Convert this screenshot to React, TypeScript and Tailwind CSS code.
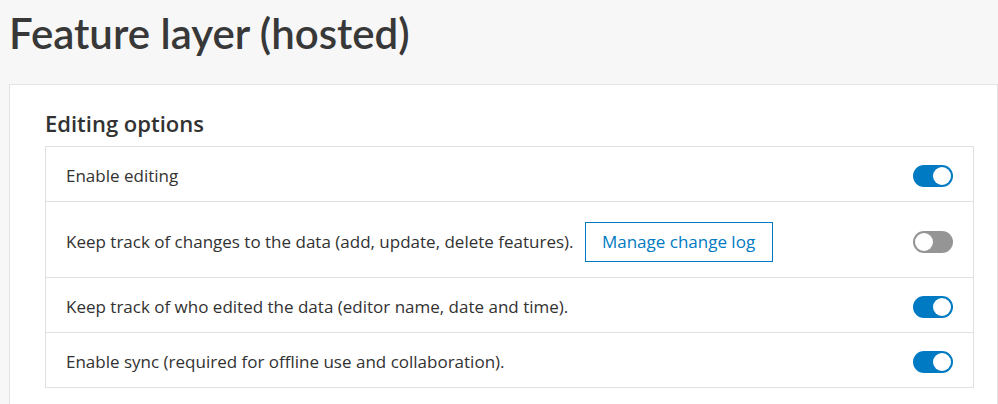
import React from "react";

function Toggle({ on }: { on: boolean }) {
  return (
    <div
      className={`relative h-[22px] w-[40px] rounded-full ${on ? "bg-[#007ac2]" : "bg-[#959595]"}`}
    >
      <div
        className={`absolute top-[2px] h-[18px] w-[18px] rounded-full bg-white ${on ? "right-[2px]" : "left-[2px]"}`}
      />
    </div>
  );
}

function Row({ label, on, button, h }: { label: string; on: boolean; button?: boolean; h: string }) {
  return (
    <div className={`flex items-center justify-between border-t border-[#e0e0e0] pl-[20px] pr-[20px] pt-[4px] first:border-t-0 ${h}`}>
      <div className="flex items-center gap-[11px]">
        <span className="text-[17px] text-[#323232]">{label}</span>
        {button && (
          <button className="h-[40px] w-[188px] border border-[#007ac2] bg-white text-[17px] text-[#007ac2]">
            Manage change log
          </button>
        )}
      </div>
      <Toggle on={on} />
    </div>
  );
}

export default function App() {
  return (
    <div className="h-[404px] w-[998px] overflow-hidden bg-[#f7f7f7]" style={{ fontFamily: "'Open Sans', sans-serif" }}>
      <div className="pl-[9px] pt-[8px]">
        <h1 className="text-[42px] font-semibold leading-[50px] text-[#383838]" style={{ fontFamily: "Lato, sans-serif" }}>Feature layer (hosted)</h1>
      </div>
      <div className="ml-[9px] mt-[26px] h-[400px] border border-[#e4e4e4] bg-white pl-[35px] pr-[23px] pt-[24px]">
        <h2 className="text-[22px] font-semibold leading-[28px] text-[#323232]">Editing options</h2>
        <div className="mt-[9px] border border-[#e0e0e0]">
          <Row label="Enable editing" on h="h-[54px]" />
          <Row label="Keep track of changes to the data (add, update, delete features)." on={false} button h="h-[76px]" />
          <Row label="Keep track of who edited the data (editor name, date and time)." on h="h-[55px]" />
          <Row label="Enable sync (required for offline use and collaboration)." on h="h-[55px]" />
        </div>
      </div>
    </div>
  );
}
